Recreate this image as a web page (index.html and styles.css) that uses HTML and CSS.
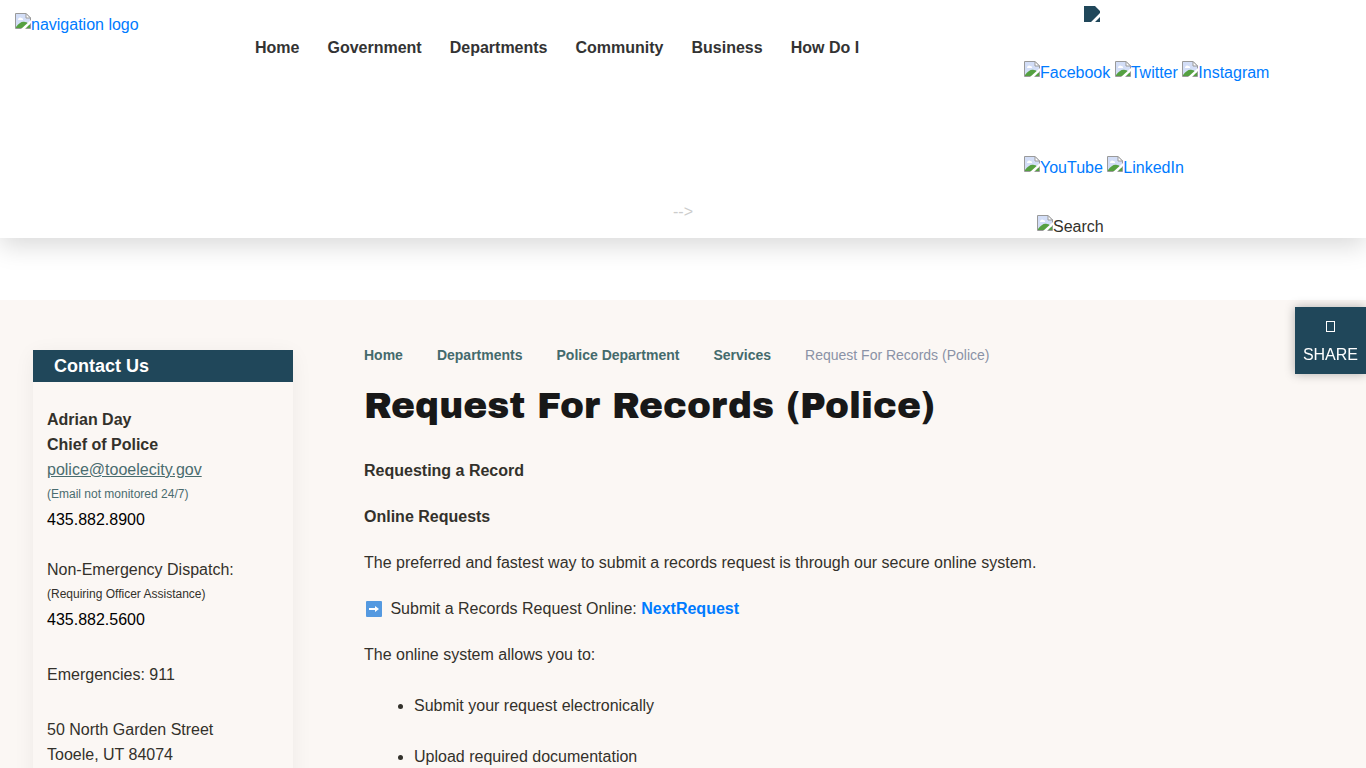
FILE: index.html
```
<!DOCTYPE html>
<html lang="en">
<head>
    <meta charset="UTF-8">
    <meta name="viewport" content="width=device-width, initial-scale=1.0">
    <title>Request For Records (Police)</title>
    <link rel="stylesheet" href="styles.css">
</head>
<body>

    <!-- shared placeholder icon -->
    <svg class="sprite" aria-hidden="true">
        <symbol id="picture" viewBox="0 0 16 16">
            <path d="M0.5 0.5H11L15.5 5V15.5H0.5Z" fill="#d3def7" stroke="#9a9a9a"/>
            <path d="M3 7C3 5 5 4 6 5C7.500 4.500 8.500 6 8 7Z" fill="#fff"/>
            <path d="M1 15V14C4 10 7 8 10 9C12 9 14 11 15 12V15Z" fill="#55a041"/>
            <path d="M11 0.500V5H15.500Z" fill="#fff" stroke="#9a9a9a"/>
            <path d="M16 7V10L10 16H6Z" fill="#fff"/>
        </symbol>
    </svg>

    <header class="header">
        <a class="logo" href="#"><svg class="pic"><use href="#picture"/></svg>navigation logo</a>

        <nav class="menu">
            <a href="#">Home</a>
            <a href="#">Government</a>
            <a href="#">Departments</a>
            <a href="#">Community</a>
            <a href="#">Business</a>
            <a href="#">How Do I</a>
        </nav>

        <div class="tools">
            <button class="translate" type="button" aria-label="Translate">
                <svg viewBox="0 0 16 16"><path d="M0 0H11L16 5V7L7 16H0Z M16 11V16H11Z" fill="#20475a"/></svg>
            </button>
            <div class="social">
                <a href="#"><svg class="pic"><use href="#picture"/></svg>Facebook</a>
                <a href="#"><svg class="pic"><use href="#picture"/></svg>Twitter</a>
                <a href="#"><svg class="pic"><use href="#picture"/></svg>Instagram</a>
                <a href="#"><svg class="pic"><use href="#picture"/></svg>YouTube</a>
                <a href="#"><svg class="pic"><use href="#picture"/></svg>LinkedIn</a>
            </div>
            <button class="search" type="button"><svg class="pic"><use href="#picture"/></svg>Search</button>
        </div>

        <span class="arrow">--&gt;</span>
    </header>

    <div class="page">
        <aside class="contact">
            <h2>Contact Us</h2>
            <div class="contact-body">
                <p>
                    <strong>Adrian Day</strong><br>
                    <strong>Chief of Police</strong><br>
                    <a class="email" href="#">police@tooelecity.gov</a><br>
                    <small class="note">(Email not monitored 24/7)</small><br>
                    <a class="phone" href="#">435.882.8900</a><br>
                    <br>
                    Non-Emergency Dispatch:<br>
                    <small>(Requiring Officer Assistance)</small><br>
                    <a class="phone" href="#">435.882.5600</a>
                </p>
                <p>Emergencies: 911</p>
                <p>
                    50 North Garden Street<br>
                    Tooele, UT 84074
                </p>
            </div>
        </aside>

        <main class="content">
            <nav class="breadcrumb">
                <a href="#">Home</a>
                <a href="#">Departments</a>
                <a href="#">Police Department</a>
                <a href="#">Services</a>
                <span>Request For Records (Police)</span>
            </nav>

            <h1>Request For Records (Police)</h1>

            <p><strong>Requesting a Record</strong></p>
            <p><strong>Online Requests</strong></p>
            <p>The preferred and fastest way to submit a records request is through our secure online system.</p>
            <p>
                <svg class="emoji" viewBox="0 0 16 16" aria-hidden="true">
                    <rect width="16" height="16" rx="1" fill="#5499e0"/>
                    <path d="M3 7H9V5L13 8L9 11V9H3Z" fill="#fff"/>
                </svg>
                Submit a Records Request Online: <a href="#"><strong>NextRequest</strong></a>
            </p>
            <p>The online system allows you to:</p>
            <ul>
                <li>Submit your request electronically</li>
                <li>Upload required documentation</li>
            </ul>
        </main>
    </div>

    <button class="share" type="button">
        <span class="share-icon"></span>
        SHARE
    </button>

</body>
</html>
```

FILE: styles.css
```
* {
    box-sizing: border-box;
}

body {
    margin: 0;
    font-family: "Liberation Sans", Arial, sans-serif;
    font-size: 16px;
    line-height: 24px;
    color: #33312b;
    background: #fff;
}

a {
    color: #007bff;
    text-decoration: none;
}

button {
    padding: 0;
    border: none;
    background: none;
    font: inherit;
    color: inherit;
    cursor: pointer;
}

.sprite {
    display: none;
}

.pic {
    width: 16px;
    height: 16px;
    vertical-align: 1px;
}

/* header */
.header {
    display: grid;
    grid-template-columns: 240px 1fr 342px;
    background: #fff;
    box-shadow: 0 8px 24px rgba(0, 0, 0, 0.15);
}

.logo {
    grid-area: 1 / 1;
    padding: 13px 15px;
}

.menu {
    grid-area: 1 / 2;
    display: flex;
    gap: 28px;
    padding: 36px 15px;
}

.menu a {
    color: #333;
    font-weight: bold;
}

.tools {
    grid-area: 1 / 3;
    display: flex;
    flex-direction: column;
    align-items: flex-start;
}

.translate {
    margin: 6px 0 3px 60px;
}

.translate svg {
    display: block;
    width: 16px;
    height: 16px;
}

.social {
    padding-right: 60px;
    line-height: 95px;
}

.social a {
    display: inline-block;
    white-space: nowrap;
}

.search {
    margin-left: 13px;
    line-height: 23px;
}

.arrow {
    grid-area: 1 / 1 / 2 / -1;
    align-self: end;
    justify-self: center;
    margin-bottom: 14px;
    color: #ccc;
}

/* page */
.page {
    display: flex;
    align-items: flex-start;
    gap: 71px;
    margin-top: 62px;
    padding: 50px 33px;
    background: #fbf7f4;
}

.contact {
    flex: 0 0 260px;
    line-height: 25px;
    box-shadow: 0 4px 20px rgba(0, 0, 0, 0.06);
}

.contact h2 {
    margin: 0;
    padding: 0 21px;
    background: #20475a;
    color: #fff;
    font-size: 18px;
    line-height: 32px;
}

.contact-body {
    padding: 25px 14px;
}

.contact p {
    margin: 0 0 30px;
}

.contact small {
    font-size: 12px;
    line-height: 12px;
    vertical-align: 2px;
}

.email {
    color: #4a6c6f;
    text-decoration: underline;
}

.note {
    color: #4a6c6f;
}

.phone {
    color: #000;
}

.content {
    flex: 1;
    line-height: 30px;
}

.breadcrumb {
    display: flex;
    gap: 34px;
    font-size: 14px;
    line-height: 10px;
}

.breadcrumb a {
    color: #446a6c;
    font-weight: bold;
}

.breadcrumb span {
    color: #8a92a6;
}

h1 {
    margin: 21px 0 25px;
    color: #181818;
    font-family: "Archivo Black", "Arial Black", Inter, sans-serif;
    font-size: 36px;
    font-weight: 400;
    line-height: 50px;
}

.content p {
    margin: 0 0 16px;
}

.emoji {
    width: 20px;
    height: 16px;
    margin-right: 2px;
    vertical-align: -3px;
}

.content ul {
    margin: 0;
    padding-left: 50px;
}

.content li {
    padding: 5px 0 16px;
}

/* share tab */
.share {
    position: fixed;
    top: 307px;
    right: 0;
    display: flex;
    flex-direction: column;
    align-items: center;
    padding: 14px 8px 7px;
    background: #20475a;
    color: #fff;
    line-height: 24px;
    box-shadow: 0 0 10px rgba(0, 0, 0, 0.3);
}

.share-icon {
    width: 9px;
    height: 11px;
    margin-bottom: 11px;
    border: 1px solid #fff;
}
```
